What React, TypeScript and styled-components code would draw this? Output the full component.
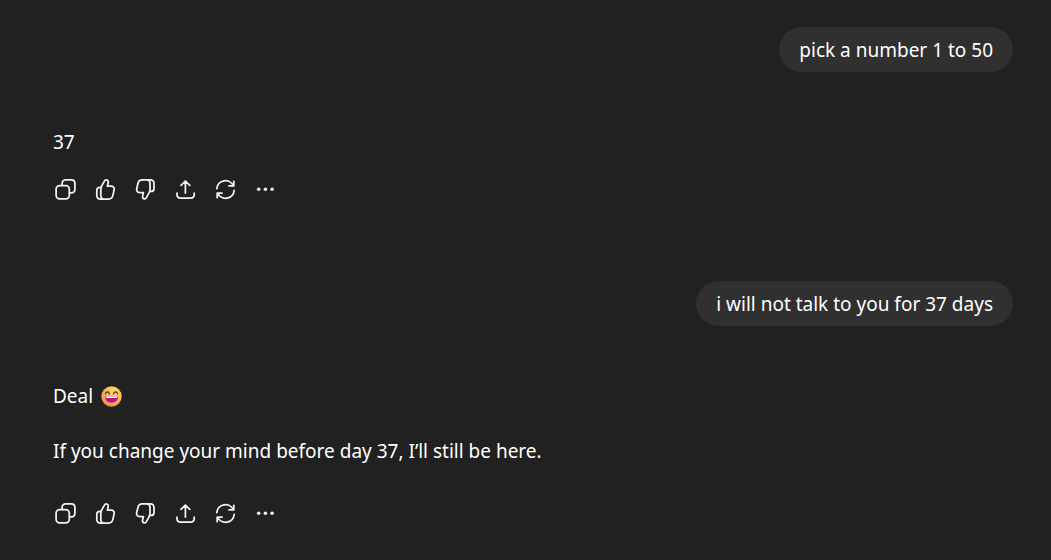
import React from 'react';
import styled, { createGlobalStyle } from 'styled-components';

const GlobalStyle = createGlobalStyle`
  *, *::before, *::after { box-sizing: border-box; }
  body {
    margin: 0;
    background: #212121;
    color: #fff;
    font-family: 'Segoe UI', 'Noto Sans', 'Open Sans', sans-serif;
    font-size: 19px;
    line-height: 35px;
  }
`;

const Thread = styled.main`
  display: flex;
  flex-direction: column;
  gap: 72px;
  padding: 27px 38px 27px 53px;
`;

const Turn = styled.section`
  display: flex;
  flex-direction: column;
  gap: 53px;
`;

const Bubble = styled.p`
  align-self: flex-end;
  margin: 0;
  padding: 6px 20px 4px;
  border-radius: 23px;
  background: #303030;
`;

const Reply = styled.article<{ $gap: number }>`
  display: flex;
  flex-direction: column;
  gap: ${(p) => p.$gap}px;
`;

const Prose = styled.div`
  display: flex;
  flex-direction: column;
  gap: 20px;
`;

const Paragraph = styled.p`
  display: flex;
  align-items: center;
  gap: 8px;
  margin: 0;
`;

const Actions = styled.div`
  display: flex;
  margin-left: -8px;
`;

const ActionButton = styled.button`
  display: flex;
  align-items: center;
  justify-content: center;
  width: 40px;
  height: 40px;
  padding: 0;
  border: 0;
  border-radius: 10px;
  background: transparent;
  color: #f3f3f3;
  cursor: pointer;

  &:hover { background: #303030; }
`;

const Icon = styled.svg.attrs({ viewBox: '0 0 24 24', 'aria-hidden': true })`
  width: 24px;
  height: 24px;
  fill: none;
  stroke: currentColor;
  stroke-width: 1.75;
  stroke-linecap: round;
  stroke-linejoin: round;
`;

const EmojiSvg = styled.svg`
  width: 22px;
  height: 22px;
`;

const thumb =
  'M7.8 10.6 11.4 4.1C11.9 3.1 12.8 2.7 13.8 3 15 3.4 15.5 4.6 15.2 5.8L14.4 9.2H18.1C20.3 9.2 21.6 10.9 21.1 13L19.8 18.6C19.3 20.8 17.8 22 15.6 22H7.4C5.2 22 3.8 20.6 3.8 18.4V13.4C3.8 11.6 5 10.4 6.8 10.4H8.3M8.3 10.4C7.8 11.2 7.8 12 7.8 13V18.2C7.8 20.4 8.8 22 11 22';

const actions = [
  {
    label: 'Copy',
    art: (
      <>
        <rect x="3.1" y="8.5" width="13.2" height="13.4" rx="3.6" />
        <path d="M9.1 8.3V6.4C9.1 4.2 10.5 2.8 12.7 2.8H18.3C20.5 2.8 21.9 4.2 21.9 6.4V12.2C21.9 14.4 20.5 15.8 18.3 15.8H16.5" />
      </>
    ),
  },
  { label: 'Good response', art: <path d={thumb} /> },
  { label: 'Bad response', art: <path d={thumb} transform="rotate(180 12.4 12.4)" /> },
  {
    label: 'Share',
    art: <path d="M12.4 16V4.2M8 8.4 12.4 4 16.8 8.4M4 16.2V17.4C4 19.8 5.4 21 7.6 21H17.6C19.8 21 21.2 19.8 21.2 17.4V16.2" />,
  },
  {
    label: 'Try again',
    art: <path d="M3.8 11.6A8.7 8.7 0 0 1 20.4 8.8M20.8 4.3V8.8H16M21.2 13.4A8.7 8.7 0 0 1 4.6 16.2M4.2 20.7V16.2H9" />,
  },
  {
    label: 'More actions',
    art: (
      <g fill="currentColor" stroke="none">
        <circle cx="5.7" cy="12.3" r="1.8" />
        <circle cx="12.4" cy="12.3" r="1.8" />
        <circle cx="19.1" cy="12.3" r="1.8" />
      </g>
    ),
  },
];

function ActionBar() {
  return (
    <Actions role="group" aria-label="Response actions">
      {actions.map(({ label, art }) => (
        <ActionButton key={label} type="button" aria-label={label}>
          <Icon>{art}</Icon>
        </ActionButton>
      ))}
    </Actions>
  );
}

function GrinEmoji() {
  return (
    <EmojiSvg viewBox="0 0 22 22" role="img" aria-label="grinning face with smiling eyes">
      <defs>
        <radialGradient id="face" cx="0.66" cy="0.25" r="0.85">
          <stop offset="0" stopColor="#ffdb62" />
          <stop offset="0.5" stopColor="#fbbb55" />
          <stop offset="1" stopColor="#ee8746" />
        </radialGradient>
      </defs>
      <circle cx="10.5" cy="10.5" r="10.2" fill="url(#face)" />
      <path d="M4.5 7.8C4.9 5.4 8 5.4 8.5 7.8M12.5 7.8C13 5.4 16.1 5.4 16.5 7.8" fill="none" stroke="#623b3c" strokeWidth="1.3" strokeLinecap="round" />
      <path d="M4.1 10.6H16.9C16.9 14.6 14.3 16.8 10.5 16.8S4.1 14.6 4.1 10.6Z" fill="#b0148e" />
      <path d="M4.7 10.6H16.3C16.3 11.5 15.9 11.9 15.2 11.9H5.8C5.1 11.9 4.7 11.5 4.7 10.6Z" fill="#fff" />
    </EmojiSvg>
  );
}

export default function App() {
  return (
    <>
      <GlobalStyle />
      <Thread>
        <Turn>
          <Bubble>pick a number 1 to 50</Bubble>
          <Reply $gap={9}>
            <Prose>
              <Paragraph>37</Paragraph>
            </Prose>
            <ActionBar />
          </Reply>
        </Turn>
        <Turn>
          <Bubble>i will not talk to you for 37 days</Bubble>
          <Reply $gap={24}>
            <Prose>
              <Paragraph>
                Deal <GrinEmoji />
              </Paragraph>
              <Paragraph>If you change your mind before day 37, I’ll still be here.</Paragraph>
            </Prose>
            <ActionBar />
          </Reply>
        </Turn>
      </Thread>
    </>
  );
}
